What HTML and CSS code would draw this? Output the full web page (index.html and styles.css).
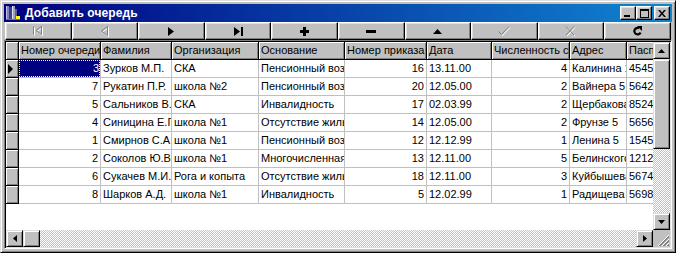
FILE: index.html
```html
<!DOCTYPE html>
<html lang="ru">

<head>
    <meta charset="UTF-8">
    <title>Добавить очередь</title>
    <link rel="stylesheet" href="styles.css">
</head>

<body>
    <div class="window">
        <div class="titlebar">
            <svg class="app-icon" width="16" height="16" viewBox="0 0 16 16">
                <rect x="1" y="1" width="3" height="13" fill="#8080c0"/>
                <rect x="4" y="2" width="3" height="12" fill="#404080"/>
                <rect x="7" y="1" width="3" height="13" fill="#a0a0c0"/>
                <rect x="10" y="4" width="2" height="10" fill="#6060a0"/>
                <rect x="1" y="1" width="1" height="13" fill="#c0c0e0"/>
                <rect x="7" y="1" width="1" height="13" fill="#e0e0f0"/>
                <rect x="12" y="6" width="1" height="8" fill="#000"/>
                <rect x="11" y="11" width="4" height="3" fill="#ffff00"/>
                <rect x="1" y="14" width="14" height="1" fill="#808000"/>
            </svg>
            <span class="title">Добавить очередь</span>
            <div class="caption-btns">
                <div class="cap-btn">
                    <svg width="8" height="7" viewBox="0 0 8 7"><rect x="0" y="5" width="6" height="2" fill="#000"/></svg>
                </div>
                <div class="cap-btn">
                    <svg width="9" height="9" viewBox="0 0 9 9"><path d="M0 0h9v9H0z M1 2v6h7V2z" fill="#000" fill-rule="evenodd"/></svg>
                </div>
                <div class="cap-btn close">
                    <svg width="8" height="7" viewBox="0 0 8 7"><path d="M0 0h2l2 2.5L6 0h2L5 3.5 8 7H6L4 4.5 2 7H0l3-3.5z" fill="#000"/></svg>
                </div>
            </div>
        </div>

        <div class="navigator">
            <div class="nav-btn">
                <svg width="12" height="10" viewBox="0 0 12 10">
                    <g fill="none" stroke="#fff" transform="translate(1 1)"><path d="M1.5 0.5v8M9.5 0.5v8L4 4.5z"/></g>
                    <g fill="none" stroke="#808080"><path d="M1.5 0.5v8M9.5 0.5v8L4 4.5z"/></g>
                </svg>
            </div>
            <div class="nav-btn">
                <svg width="10" height="11" viewBox="0 0 10 11">
                    <g fill="none" stroke="#fff" transform="translate(1 1)"><path d="M7.5 0.5v9L1.5 5z"/></g>
                    <g fill="none" stroke="#808080"><path d="M7.5 0.5v9L1.5 5z"/></g>
                </svg>
            </div>
            <div class="nav-btn">
                <svg width="6" height="9" viewBox="0 0 6 9"><path d="M0 0l6 4.5L0 9z" fill="#000"/></svg>
            </div>
            <div class="nav-btn">
                <svg width="9" height="9" viewBox="0 0 9 9"><path d="M0 0l6 4.5L0 9z M7 0h2v9H7z" fill="#000"/></svg>
            </div>
            <div class="nav-btn">
                <svg width="9" height="9" viewBox="0 0 9 9"><path d="M3 0h3v3h3v3H6v3H3V6H0V3h3z" fill="#000"/></svg>
            </div>
            <div class="nav-btn">
                <svg width="10" height="3" viewBox="0 0 10 3"><rect width="10" height="3" fill="#000"/></svg>
            </div>
            <div class="nav-btn">
                <svg width="9" height="5" viewBox="0 0 9 5"><path d="M4.5 0L9 5H0z" fill="#000"/></svg>
            </div>
            <div class="nav-btn">
                <svg width="13" height="11" viewBox="0 0 13 11">
                    <g fill="none" stroke="#fff" transform="translate(1 1)"><path d="M0.5 5.5l3 3 7.5-8"/></g>
                    <g fill="none" stroke="#808080"><path d="M0.5 5.5l3 3 7.5-8"/></g>
                </svg>
            </div>
            <div class="nav-btn">
                <svg width="12" height="11" viewBox="0 0 12 11">
                    <g fill="none" stroke="#fff" transform="translate(1 1)"><path d="M1 0.5l8 8.5M9 0.5L1 9"/></g>
                    <g fill="none" stroke="#808080"><path d="M1 0.5l8 8.5M9 0.5L1 9"/></g>
                </svg>
            </div>
            <div class="nav-btn">
                <svg width="10" height="10" viewBox="0 0 10 10">
                    <path d="M7.5 6.5A3.2 3.2 0 1 1 6 2.3" fill="none" stroke="#000" stroke-width="2.2"/>
                    <path d="M4 0h5v5z" fill="#000"/>
                </svg>
            </div>
        </div>

        <div class="grid-frame">
            <div class="grid-inner">
                <div class="grid-view">
                    <div class="row head">
                        <div class="ind"></div>
                        <div class="hcell">Номер очереди</div>
                        <div class="hcell">Фамилия</div>
                        <div class="hcell">Организация</div>
                        <div class="hcell">Основание</div>
                        <div class="hcell">Номер приказа</div>
                        <div class="hcell">Дата</div>
                        <div class="hcell">Численность семьи</div>
                        <div class="hcell">Адрес</div>
                        <div class="hcell">Паспорт</div>
                    </div>
                    <div class="row">
                        <div class="ind"><svg width="5" height="10" viewBox="0 0 5 10"><path d="M0 0l5 5-5 5z" fill="#000"/></svg></div>
                        <div class="cell num selected"><span>3</span></div>
                        <div class="cell">Зурков М.П.</div>
                        <div class="cell">СКА</div>
                        <div class="cell">Пенсионный возраст</div>
                        <div class="cell num">16</div>
                        <div class="cell">13.11.00</div>
                        <div class="cell num">4</div>
                        <div class="cell">Калинина 12</div>
                        <div class="cell">45451234</div>
                    </div>
                    <div class="row">
                        <div class="ind"></div>
                        <div class="cell num">7</div>
                        <div class="cell">Рукатин П.Р.</div>
                        <div class="cell">школа №2</div>
                        <div class="cell">Пенсионный возраст</div>
                        <div class="cell num">20</div>
                        <div class="cell">12.05.00</div>
                        <div class="cell num">2</div>
                        <div class="cell">Вайнера 5</div>
                        <div class="cell">5642</div>
                    </div>
                    <div class="row">
                        <div class="ind"></div>
                        <div class="cell num">5</div>
                        <div class="cell">Сальников В.Г.</div>
                        <div class="cell">СКА</div>
                        <div class="cell">Инвалидность</div>
                        <div class="cell num">17</div>
                        <div class="cell">02.03.99</div>
                        <div class="cell num">2</div>
                        <div class="cell">Щербакова 3</div>
                        <div class="cell">8524</div>
                    </div>
                    <div class="row">
                        <div class="ind"></div>
                        <div class="cell num">4</div>
                        <div class="cell">Синицина Е.Г.</div>
                        <div class="cell">школа №1</div>
                        <div class="cell">Отсутствие жилья</div>
                        <div class="cell num">14</div>
                        <div class="cell">12.05.00</div>
                        <div class="cell num">2</div>
                        <div class="cell">Фрунзе 5</div>
                        <div class="cell">5656</div>
                    </div>
                    <div class="row">
                        <div class="ind"></div>
                        <div class="cell num">1</div>
                        <div class="cell">Смирнов С.А.</div>
                        <div class="cell">школа №1</div>
                        <div class="cell">Пенсионный возраст</div>
                        <div class="cell num">12</div>
                        <div class="cell">12.12.99</div>
                        <div class="cell num">1</div>
                        <div class="cell">Ленина 5</div>
                        <div class="cell">15453</div>
                    </div>
                    <div class="row">
                        <div class="ind"></div>
                        <div class="cell num">2</div>
                        <div class="cell">Соколов Ю.В.</div>
                        <div class="cell">школа №1</div>
                        <div class="cell">Многочисленная семья</div>
                        <div class="cell num">13</div>
                        <div class="cell">12.11.00</div>
                        <div class="cell num">5</div>
                        <div class="cell">Белинского 7</div>
                        <div class="cell">1212</div>
                    </div>
                    <div class="row">
                        <div class="ind"></div>
                        <div class="cell num">6</div>
                        <div class="cell">Сукачев М.И.</div>
                        <div class="cell">Рога и копыта</div>
                        <div class="cell">Отсутствие жилья</div>
                        <div class="cell num">18</div>
                        <div class="cell">12.11.00</div>
                        <div class="cell num">3</div>
                        <div class="cell">Куйбышева 2</div>
                        <div class="cell">5674</div>
                    </div>
                    <div class="row">
                        <div class="ind"></div>
                        <div class="cell num">8</div>
                        <div class="cell">Шарков А.Д.</div>
                        <div class="cell">школа №1</div>
                        <div class="cell">Инвалидность</div>
                        <div class="cell num">5</div>
                        <div class="cell">12.02.99</div>
                        <div class="cell num">1</div>
                        <div class="cell">Радищева</div>
                        <div class="cell">5698</div>
                    </div>
                </div>

                <div class="vscroll">
                    <div class="sb-btn"><svg width="7" height="4" viewBox="0 0 7 4"><path d="M3.5 0L7 4H0z" fill="#000"/></svg></div>
                    <div class="sb-thumb vthumb"></div>
                    <div class="sb-track"></div>
                    <div class="sb-btn"><svg width="7" height="4" viewBox="0 0 7 4"><path d="M0 0h7L3.5 4z" fill="#000"/></svg></div>
                </div>
                <div class="hscroll">
                    <div class="sb-btn"><svg width="4" height="7" viewBox="0 0 4 7"><path d="M4 0v7L0 3.5z" fill="#000"/></svg></div>
                    <div class="sb-thumb"></div>
                    <div class="sb-track"></div>
                    <div class="sb-btn"><svg width="4" height="7" viewBox="0 0 4 7"><path d="M0 0v7L4 3.5z" fill="#000"/></svg></div>
                </div>
                <div class="sizegrip">
                    <svg width="17" height="17" viewBox="0 0 17 17">
                        <path d="M16 5L5 16M16 9L9 16M16 13L13 16" stroke="#fff" stroke-width="1"/>
                        <path d="M16 6L6 16M16 7L7 16M16 10L10 16M16 11L11 16M16 14L14 16M16 15L15 16" stroke="#808080" stroke-width="1"/>
                    </svg>
                </div>
            </div>
        </div>
    </div>
</body>

</html>
```

FILE: styles.css
```css
body {
    margin: 0;
    font-family: "Liberation Sans", Arial, sans-serif;
    font-size: 11px;
    background: #c0c0c0;
}

.window {
    width: 676px;
    height: 253px;
    box-sizing: border-box;
    background: #c0c0c0;
    border: 1px solid;
    border-color: #dfdfdf #000 #000 #dfdfdf;
    box-shadow: inset 1px 1px #fff, inset -1px -1px #808080;
    padding: 3px;
    display: flex;
    flex-direction: column;
}

/* title */
.titlebar {
    height: 18px;
    flex: none;
    display: flex;
    align-items: center;
    background: linear-gradient(to right, #000080, #1084d0);
    color: #fff;
}

.app-icon {
    margin: 0 4px 0 1px;
    flex: none;
}

.title {
    font-weight: bold;
    font-size: 12px;
    letter-spacing: 0.1px;
}

.caption-btns {
    margin-left: auto;
    margin-right: 2px;
    display: flex;
}

.cap-btn {
    width: 16px;
    height: 14px;
    box-sizing: border-box;
    background: #c0c0c0;
    border: 1px solid;
    border-color: #fff #000 #000 #fff;
    box-shadow: inset -1px -1px #808080, inset 1px 1px #dfdfdf;
    display: flex;
    align-items: center;
    justify-content: center;
}

.cap-btn.close {
    margin-left: 2px;
}

/* db navigator */
.navigator {
    height: 18px;
    flex: none;
    display: flex;
    padding: 0 1px;
}

.nav-btn {
    flex: 1;
    box-sizing: border-box;
    background: #c0c0c0;
    border: 1px solid;
    border-color: #fff #000 #000 #fff;
    box-shadow: inset -1px -1px #808080, inset 1px 1px #dfdfdf;
    display: flex;
    align-items: center;
    justify-content: center;
}

/* grid */
.grid-frame {
    flex: 1;
    box-sizing: border-box;
    border: 1px solid;
    border-color: #808080 #fff #fff #808080;
    box-shadow: inset 1px 1px #000, inset -1px -1px #dfdfdf;
    padding: 1px;
    min-height: 0;
}

.grid-inner {
    height: 100%;
    display: grid;
    grid-template-columns: 1fr 17px;
    grid-template-rows: 1fr 17px;
    background: #fff;
}

.grid-view {
    overflow: hidden;
    background: #fff;
}

.row {
    display: grid;
    grid-template-columns: 13px 82px 71px 87px 86px 82px 65px 78px 57px 64px;
    height: 18px;
}

.cell,
.hcell,
.ind {
    box-sizing: border-box;
    overflow: hidden;
    white-space: nowrap;
    line-height: 17px;
}

.cell {
    padding: 0 2px;
    border-right: 1px solid #c0c0c0;
    border-bottom: 1px solid #c0c0c0;
    color: #000;
}

.num {
    text-align: right;
}

.hcell,
.ind {
    background: #c0c0c0;
    border-right: 1px solid #000;
    border-bottom: 1px solid #000;
    box-shadow: inset 1px 1px #fff, inset -1px -1px #808080;
}

.hcell {
    padding: 0 2px;
}

.ind {
    display: flex;
    align-items: center;
    padding-left: 2px;
}

.selected {
    background: #000080;
    color: #fff;
    border-right-color: #c0c0c0;
}

.selected span {
    display: block;
    height: 17px;
    margin: 0 -2px;
    padding: 0 1px;
    outline: 1px dotted #ffff80;
    outline-offset: -1px;
}

/* scrollbars */
.vscroll,
.hscroll {
    display: flex;
}

.vscroll {
    flex-direction: column;
}

.sb-btn,
.sb-thumb {
    flex: none;
    width: 17px;
    height: 17px;
    box-sizing: border-box;
    background: #c0c0c0;
    border: 1px solid;
    border-color: #dfdfdf #000 #000 #dfdfdf;
    box-shadow: inset 1px 1px #fff, inset -1px -1px #808080;
    display: flex;
    align-items: center;
    justify-content: center;
}

.vthumb {
    height: 90px;
}

.sb-track {
    flex: 1;
    background: repeating-conic-gradient(#c0c0c0 0 25%, #fff 0 50%) 0 0 / 2px 2px;
}

.sizegrip {
    background: #c0c0c0;
}
```
